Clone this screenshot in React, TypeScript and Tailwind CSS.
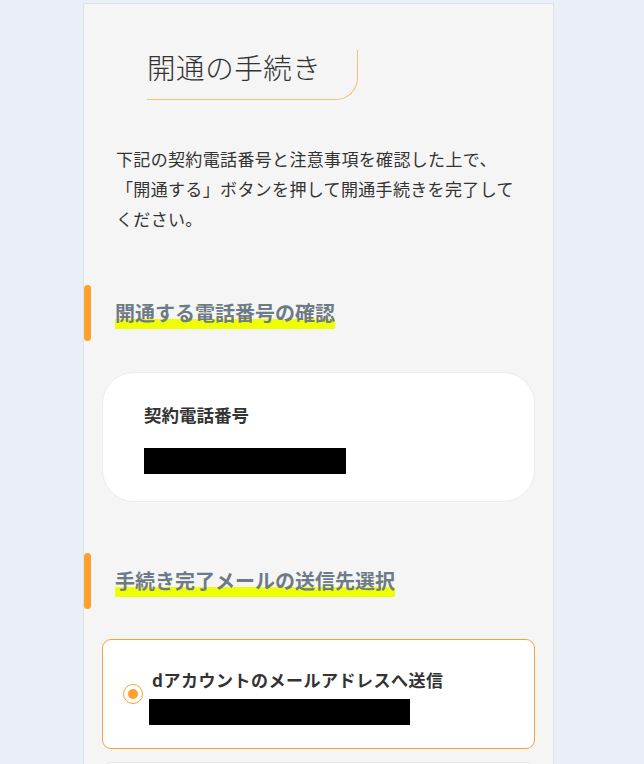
import React from "react";

const jp = { fontFamily: '"Noto Sans CJK JP", "Noto Sans", sans-serif' };

function SectionHeading({ children }: { children: React.ReactNode }) {
  return (
    <div className="flex items-center">
      <div className="h-[56px] w-[7px] rounded-[4px] bg-[#ff9f2e]" />
      <h2 className="ml-[24px] mt-[2px] inline-block text-[20px] font-bold leading-[28px] pb-[2px] text-[#6e7b85] bg-[linear-gradient(transparent_67%,#eeff00_67%)]">
        {children}
      </h2>
    </div>
  );
}

export default function App() {
  return (
    <div className="min-h-[764px] w-full bg-[#e9eef7] pt-[3px]" style={jp}>
      <div className="ml-[83px] w-[471px] min-h-[761px] border-x border-t border-[#dde2ea] bg-[#f5f5f5] pb-[40px]">
        <div className="ml-[63px] mt-[46px] inline-block h-[50px] border-b border-r border-[#f9bd73] rounded-br-[22px] pr-[36px]">
          <h1 className="text-[28.5px] font-extralight leading-[34px] text-[#333] tracking-[0.02em]">開通の手続き</h1>
        </div>

        <p className="ml-[32px] mt-[44px] whitespace-nowrap text-[17px] leading-[30px] tracking-[0.02em] text-[#333]">
          下記の契約電話番号と注意事項を確認した上で、
          <br />
          「開通する」ボタンを押して開通手続きを完了して
          <br />
          ください。
        </p>

        <div className="mt-[51px]">
          <SectionHeading>開通する電話番号の確認</SectionHeading>
        </div>

        <div className="mx-[18px] mt-[31px] h-[130px] rounded-[32px] border border-[#ececec] bg-white pl-[41px] pt-[28px]">
          <div className="text-[17.5px] font-bold leading-[28px] text-[#333]">契約電話番号</div>
          <div className="mt-[19px] h-[26px] w-[202px] bg-black" />
        </div>

        <div className="mt-[51px]">
          <SectionHeading>手続き完了メールの送信先選択</SectionHeading>
        </div>

        <div className="mx-[18px] mt-[30px] flex h-[110px] items-center rounded-[9px] border border-[#f7a23d] bg-white pl-[20px]">
          <div className="flex h-[20px] w-[20px] items-center justify-center rounded-full border-[1.5px] border-[#ff9f2e]">
            <div className="h-[10px] w-[10px] rounded-full bg-[#ff9f2e]" />
          </div>
          <div className="ml-[6px] mt-[4px]">
            <div className="pl-[3px] text-[17px] font-bold leading-[26px] tracking-[0.03em] text-[#333]">
              dアカウントのメールアドレスへ送信
            </div>
            <div className="mt-[6px] h-[26px] w-[261px] bg-black" />
          </div>
        </div>

        <div className="mx-[18px] mt-[13px] h-[110px] rounded-[9px] border border-[#e6e6e6] bg-white" />
      </div>
    </div>
  );
}
